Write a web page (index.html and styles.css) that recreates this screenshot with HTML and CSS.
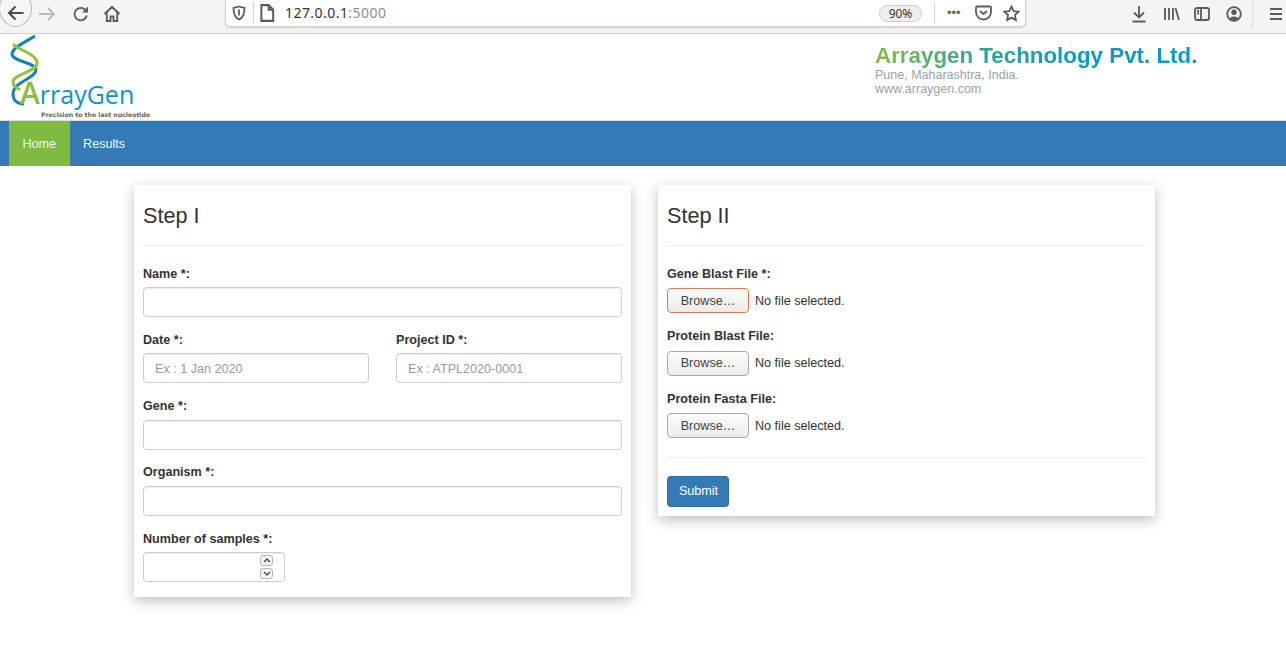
FILE: index.html
```html
<!DOCTYPE html>
<html>
<head>
  <title>ArrayGen</title>
  <link rel="stylesheet" href="styles.css">
</head>
<body>
  <div class="toolbar">
    <div class="nav-icons">
      <span class="back-circle">
        <svg width="20" height="20" viewBox="0 0 20 20"><path d="M17.5 10H3.5M9.5 3.5L3 10l6.500 6.500" class="ico ico-dark"/></svg>
      </span>
      <svg class="forward" width="18" height="18" viewBox="0 0 18 18"><path d="M1 9h15M10 3l6 6-6 6" class="ico ico-faint"/></svg>
      <svg class="reload" width="18" height="18" viewBox="0 0 18 18"><path d="M14.800 10.500a6.200 6.200 0 1 1-1.500-5.600L15.500 7" class="ico"/><path d="M16 1.500V7.500H10z" fill="#5b5b5b"/></svg>
      <svg class="home" width="18" height="18" viewBox="0 0 18 18"><path d="M1.500 9L9 1.800 16.500 9M3.800 7.500V16h3.700v-4.500h3V16h3.700V7.500" class="ico"/></svg>
    </div>
    <div class="urlbar">
      <svg class="shield" width="14" height="16" viewBox="0 0 14 16"><path d="M7 1.500L12.500 3c0 6-1 9.500-5.500 11.500C2.500 12.500 1.500 9 1.500 3z" class="ico"/><path d="M7 4.500v6" class="ico"/></svg>
      <span class="url-sep"></span>
      <svg class="page" width="16" height="18" viewBox="0 0 14 16"><path d="M2 1h6.500L12.500 5v10H2zM8.500 1v4h4" class="ico"/></svg>
      <span class="url-text">127.0.0.1<span class="url-port">:5000</span></span>
      <span class="zoom-pill">90%</span>
      <span class="url-sep sep-right"></span>
      <span class="dots">•••</span>
      <svg class="pocket" width="17" height="16" viewBox="0 0 17 16"><path d="M2 1.500h13a1 1 0 0 1 1 1V7a7.500 7.500 0 0 1-15 0V2.500a1 1 0 0 1 1-1z" class="ico"/><path d="M5 6l3.500 3L12 6" class="ico"/></svg>
      <svg class="star" width="17" height="17" viewBox="0 0 17 17"><path d="M8.500 1.500l2.100 4.600 5 .6-3.700 3.400 1 5-4.400-2.500-4.400 2.500 1-5L1.400 6.700l5-.6z" class="ico"/></svg>
    </div>
    <div class="tool-icons">
      <svg width="16" height="18" viewBox="0 0 16 18"><path d="M8 1v11M3 7.500L8 12.500l5-5M1.500 16.500h13" class="ico"/></svg>
      <svg width="17" height="16" viewBox="0 0 17 16"><path d="M2 2v12M6 2v12M10 2v12M12.500 2l3.500 12" class="ico"/></svg>
      <svg class="sidebar-ico" width="16" height="14" viewBox="0 0 16 14"><rect x="1" y="1" width="14" height="12" rx="2" class="ico"/><path d="M7 1v12M3 4h2M3 6.500h2" class="ico"/></svg>
      <svg width="16" height="16" viewBox="0 0 16 16"><circle cx="8" cy="8" r="6.800" class="ico"/><circle cx="8" cy="6.200" r="2.700" fill="#5b5b5b"/><path d="M3.500 12.500c1-2.700 8-2.700 9 0L8 14.500z" fill="#5b5b5b"/></svg>
      <span class="tool-sep"></span>
      <svg class="menu-ico" width="14" height="12" viewBox="0 0 14 12"><path d="M1 1h12M1 6h12M1 11h12" class="ico"/></svg>
    </div>
  </div>

  <div class="header">
    <div class="logo">
      <svg class="helix" width="45" height="80" viewBox="0 0 45 80">
        <path d="M35 2C22 10 12 14 12 20C12 28 36 28 36 36C36 44 13 48 13 60C13 66 17 70 24 70" class="strand strand-blue"/>
        <path d="M13 10C18 16 37 20 37 29C37 38 13 40 13 48C13 52 16 54 20 56" class="strand strand-green"/>
      </svg>
      <div class="logo-name"><span class="logo-a">A</span>rrayGen</div>
      <div class="logo-tag">Precision to the last nucleotide</div>
    </div>
    <div class="company">
      <h1 class="company-name">Arraygen Technology Pvt. Ltd.</h1>
      <p class="company-line">Pune, Maharashtra, India.</p>
      <p class="company-line">www.arraygen.com</p>
    </div>
  </div>

  <div class="navbar">
    <a class="nav-link active" href="#">Home</a>
    <a class="nav-link" href="#">Results</a>
  </div>

  <div class="main">
    <div class="card">
      <h3>Step I</h3>
      <hr>
      <div class="form-group">
        <label for="name">Name *:</label>
        <input type="text" id="name">
      </div>
      <div class="form-row">
        <div class="form-group">
          <label for="date">Date *:</label>
          <input type="text" id="date" placeholder="Ex : 1 Jan 2020">
        </div>
        <div class="form-group">
          <label for="project">Project ID *:</label>
          <input type="text" id="project" placeholder="Ex : ATPL2020-0001">
        </div>
      </div>
      <div class="form-group">
        <label for="gene">Gene *:</label>
        <input type="text" id="gene">
      </div>
      <div class="form-group">
        <label for="organism">Organism *:</label>
        <input type="text" id="organism">
      </div>
      <div class="form-group last">
        <label for="samples">Number of samples *:</label>
        <div class="number-wrap">
          <input type="text" id="samples">
          <span class="spin spin-up"><svg width="8" height="5" viewBox="0 0 8 5"><path d="M1 4l3-3 3 3" class="spin-ico"/></svg></span>
          <span class="spin spin-down"><svg width="8" height="5" viewBox="0 0 8 5"><path d="M1 1l3 3 3-3" class="spin-ico"/></svg></span>
        </div>
      </div>
    </div>

    <div class="card">
      <h3>Step II</h3>
      <hr>
      <div class="file-group">
        <label>Gene Blast File *:</label>
        <div class="file-row"><button class="browse focused">Browse…</button><span>No file selected.</span></div>
      </div>
      <div class="file-group">
        <label>Protein Blast File:</label>
        <div class="file-row"><button class="browse">Browse…</button><span>No file selected.</span></div>
      </div>
      <div class="file-group">
        <label>Protein Fasta File:</label>
        <div class="file-row"><button class="browse">Browse…</button><span>No file selected.</span></div>
      </div>
      <hr class="bottom-rule">
      <button class="submit">Submit</button>
    </div>
  </div>
</body>
</html>
```

FILE: styles.css
```css
* {
  box-sizing: border-box;
}

body {
  margin: 0;
  font-family: "Liberation Sans", Arial, sans-serif;
  font-size: 12.6px;
  line-height: 18px;
  color: #333;
  background: #fff;
}

/* browser chrome */
.toolbar {
  display: flex;
  height: 34px;
  background: #f5f4f3;
  border-bottom: 1px solid #cfcfcf;
  overflow: hidden;
}

.ico {
  fill: none;
  stroke: #5b5b5b;
  stroke-width: 1.8;
}

.ico-dark {
  stroke: #4a4a4a;
  stroke-width: 2;
}

.ico-faint {
  stroke: #b8b8b8;
}

.nav-icons {
  display: flex;
  flex-shrink: 0;
  align-items: center;
  width: 225px;
  height: 27px;
}

.back-circle {
  display: flex;
  flex-shrink: 0;
  align-items: center;
  justify-content: center;
  width: 33px;
  height: 37px;
  margin-left: -1px;
  margin-top: -10px;
  padding-top: 9px;
  border: 1px solid #b9b9b9;
  border-radius: 50%;
  background: #f7f6f5;
}

.forward {
  margin-left: 6px;
}

.reload {
  margin-left: 16px;
}

.home {
  margin-left: 13px;
}

.urlbar {
  display: flex;
  flex-shrink: 0;
  align-items: center;
  width: 801px;
  height: 28px;
  margin-top: -1px;
  padding-left: 6px;
  background: #fff;
  border: 1px solid #d0d0d0;
  border-radius: 0 0 5px 5px;
  box-shadow: 0 1px 2px rgba(0, 0, 0, 0.12);
}

.url-sep {
  width: 1px;
  height: 22px;
  margin-left: 7px;
  background: #d5d5d5;
}

.page {
  margin-left: 5px;
}

.url-text {
  margin-left: 10px;
  font-family: "Noto Sans", sans-serif;
  font-size: 14px;
  letter-spacing: 0.45px;
  color: #333;
}

.url-port {
  color: #8c8c8c;
}

.zoom-pill {
  width: 43px;
  height: 17px;
  margin-left: auto;
  font-family: "Noto Sans", sans-serif;
  font-size: 12px;
  line-height: 15px;
  text-align: center;
  background: #eef0ee;
  border: 1px solid #cfcfcf;
  border-radius: 9px;
}

.sep-right {
  margin-left: 12px;
}

.dots {
  width: 16px;
  margin-left: 12px;
  font-size: 13px;
  white-space: nowrap;
  color: #666;
}

.pocket {
  margin-left: 12px;
}

.star {
  margin-left: 11px;
  margin-right: 5px;
}

.tool-icons {
  display: flex;
  flex-shrink: 0;
  align-items: center;
  gap: 16px;
  height: 27px;
  margin-left: 105px;
}

.sidebar-ico {
  margin-left: -2px;
}

.tool-sep {
  width: 1px;
  height: 30px;
  margin-left: -6px;
  background: #dcdcdc;
}

/* site header */
.header {
  display: flex;
  justify-content: space-between;
  height: 87px;
  border-bottom: 1px solid #ddd;
}

.logo {
  position: relative;
  width: 160px;
  padding-top: 42px;
  padding-left: 20px;
}

.helix {
  position: absolute;
  left: 0;
  top: 0;
}

.strand {
  fill: none;
  stroke-width: 3;
}

.strand-blue {
  stroke: #1483b5;
}

.strand-green {
  stroke: #97c23c;
}

.logo-name {
  position: relative;
  height: 34px;
  font-family: "Open Sans", sans-serif;
  font-size: 25px;
  line-height: 34px;
  color: #1193c4;
  white-space: nowrap;
}

.logo-a {
  font-size: 30px;
  font-weight: 600;
  color: #8bbb3a;
}

.logo-tag {
  margin-top: 1px;
  margin-left: 21px;
  font-family: "DejaVu Sans", sans-serif;
  font-size: 6.2px;
  font-weight: 700;
  line-height: 8px;
  color: #5f5f5f;
  white-space: nowrap;
}

.company {
  width: 411px;
  padding-top: 9px;
}

.company-name {
  width: 323px;
  margin: 0;
  font-size: 22.35px;
  font-weight: 700;
  line-height: 25px;
  white-space: nowrap;
  color: transparent;
  background: linear-gradient(90deg, #86bd45 0%, #2aa39a 36%, #0e99c4 62%, #0e99c4 100%);
  -webkit-background-clip: text;
  background-clip: text;
}

.company-line {
  margin: 0;
  font-size: 12.5px;
  line-height: 14px;
  color: #9a9fa8;
}

/* nav */
.navbar {
  display: flex;
  height: 45px;
  padding-left: 9px;
  background: #337ab7;
}

.nav-link {
  padding: 14px 13.5px;
  line-height: 18px;
  color: #f2f6fa;
  text-decoration: none;
}

.nav-link.active {
  background: #7fbb42;
}

/* cards */
.main {
  display: flex;
  align-items: flex-start;
  gap: 27px;
  padding: 19px 0 40px 134px;
}

.card {
  width: 497px;
  padding: 17px 9px 15px;
  background: #fff;
  box-shadow: 0 4px 12px rgba(0, 0, 0, 0.25);
}

.card:last-child {
  padding-bottom: 9px;
}

.card h3 {
  margin: 0;
  font-size: 21.6px;
  font-weight: 500;
  line-height: 27px;
  color: #333;
}

hr {
  height: 1px;
  margin: 16px 0 18.5px;
  border: 0;
  background: #eee;
}

label {
  display: block;
  margin-bottom: 4.5px;
  font-weight: 700;
  line-height: 18px;
}

.form-group {
  margin-bottom: 13.75px;
}

.form-group.last {
  margin-bottom: 0;
}

.form-row {
  display: grid;
  grid-template-columns: 226px 226px;
  gap: 27px;
}

input {
  display: block;
  width: 100%;
  height: 30px;
  padding: 6px 11px 4px;
  font-family: inherit;
  font-size: 12.6px;
  color: #555;
  background: #fff;
  border: 1px solid #ccc;
  border-radius: 3.5px;
  box-shadow: inset 0 1px 1px rgba(0, 0, 0, 0.075);
}

input::placeholder {
  color: #999;
  opacity: 1;
}

.number-wrap {
  position: relative;
  width: 142px;
}

.spin {
  position: absolute;
  right: 12px;
  display: flex;
  align-items: center;
  justify-content: center;
  width: 13px;
  height: 11px;
  background: #f3f3f3;
  border: 1px solid #b5b5b5;
  border-radius: 3px;
}

.spin-up {
  top: 3px;
}

.spin-down {
  top: 16px;
}

.spin-ico {
  fill: none;
  stroke: #444;
  stroke-width: 1.3;
}

.file-group {
  margin-bottom: 14.1px;
}

.file-group label {
  margin-bottom: 5.5px;
}

.file-row {
  display: flex;
  align-items: center;
  gap: 6px;
}

.browse {
  width: 82px;
  height: 25px;
  padding: 0;
  font-family: inherit;
  font-size: 12.6px;
  color: #444;
  background: linear-gradient(#fbfbfa, #ebebe9);
  border: 1px solid #aaa;
  border-radius: 4px;
}

.browse.focused {
  border-color: #e0764f;
}

.bottom-rule {
  margin: 18.5px 0 18px;
}

.submit {
  display: block;
  width: 62px;
  height: 31px;
  padding: 0 0 0 1px;
  font-family: inherit;
  font-size: 12.6px;
  color: #fff;
  background: #337ab7;
  border: 1px solid #2e6da4;
  border-radius: 3.5px;
}
```
